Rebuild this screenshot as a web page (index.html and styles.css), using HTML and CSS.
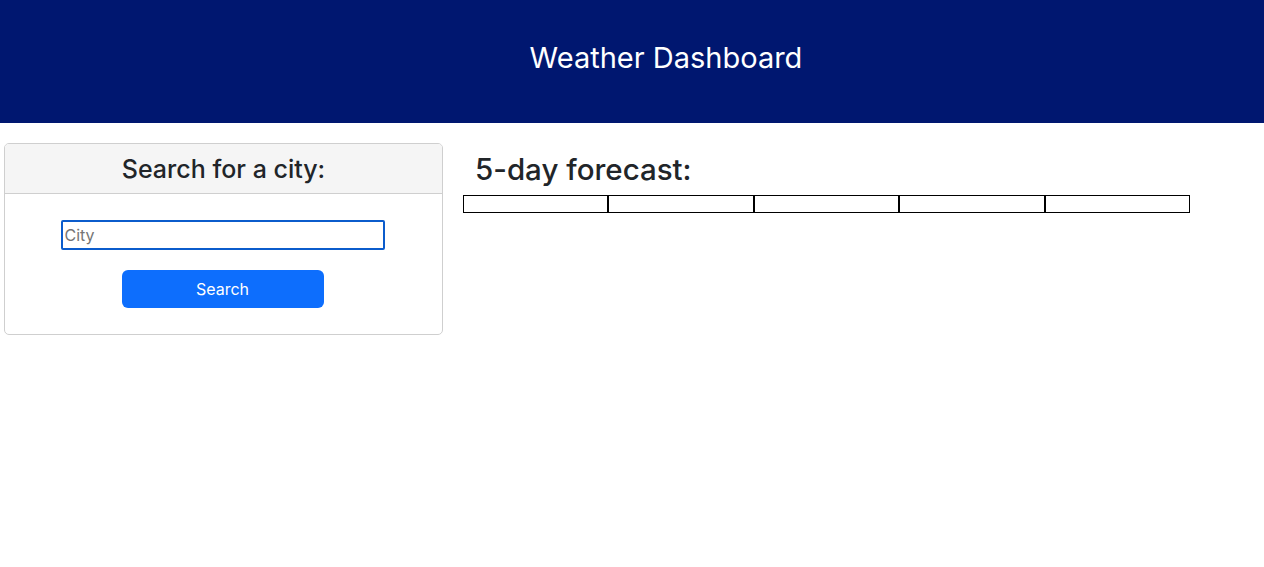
FILE: index.html
```html
<!DOCTYPE html>
<html lang="en">
<head>
<meta charset="utf-8">
<title>Weather Dashboard</title>
<link rel="stylesheet" href="styles.css">
</head>
<body>
<header class="topbar">
  <h1 class="topbar-title">Weather Dashboard</h1>
</header>
<main class="layout">
  <section class="search-card">
    <div class="search-card-header">
      <h2 class="search-card-title">Search for a city:</h2>
    </div>
    <div class="search-card-body">
      <input class="city-input" type="text" placeholder="City">
      <button class="search-btn" type="button">Search</button>
    </div>
  </section>
  <section class="forecast">
    <h2 class="forecast-title">5-day forecast:</h2>
    <div class="forecast-row">
      <div class="forecast-day"></div>
      <div class="forecast-day"></div>
      <div class="forecast-day"></div>
      <div class="forecast-day"></div>
      <div class="forecast-day"></div>
    </div>
  </section>
</main>
</body>
</html>
```
FILE: styles.css
```css
* { box-sizing: border-box; }
body {
  margin: 0;
  font-family: Inter, "Noto Sans", sans-serif;
  color: #212529;
  background: #fff;
}
.topbar {
  background: #001770;
  height: 123px;
  display: flex;
  align-items: center;
  justify-content: center;
  padding: 0 0 8px 68px;
}
.topbar-title {
  margin: 0;
  color: #fff;
  font-size: 29px;
  font-weight: 400;
}
.layout {
  display: flex;
  align-items: flex-start;
  padding: 20px 0 0 4px;
}
.search-card {
  width: 439px;
  border: 1px solid #cfcfcf;
  border-radius: 5px;
  overflow: hidden;
}
.search-card-header {
  background: #f5f5f5;
  border-bottom: 1px solid #cfcfcf;
  height: 50px;
  display: flex;
  align-items: center;
  justify-content: center;
}
.search-card-title {
  margin: 0;
  font-size: 25px;
  font-weight: 500;
}
.search-card-body {
  display: flex;
  flex-direction: column;
  align-items: center;
  padding: 26px 0 26px;
  gap: 20px;
}
.city-input {
  width: 324px;
  height: 30px;
  margin-left: -2px;
  border: 2px solid #0b5ccc;
  border-radius: 2px;
  padding: 0 2px;
  font-family: inherit;
  font-size: 16px;
  outline: none;
}
.city-input::placeholder { color: #757575; }
.search-btn {
  width: 202px;
  height: 38px;
  margin-left: -2px;
  border: 0;
  border-radius: 6px;
  background: #0d6efd;
  color: #fff;
  font-family: inherit;
  font-size: 16px;
}
.forecast {
  margin-left: 20px;
  display: flex;
  flex-direction: column;
}
.forecast-title {
  margin: 8px 0 0 12px;
  font-size: 29.5px;
  font-weight: 500;
  line-height: 36px;
}
.forecast-row {
  display: flex;
  margin-top: 8px;
}
.forecast-day {
  width: 145.4px;
  height: 18px;
  border: 1px solid #000;
}
```
